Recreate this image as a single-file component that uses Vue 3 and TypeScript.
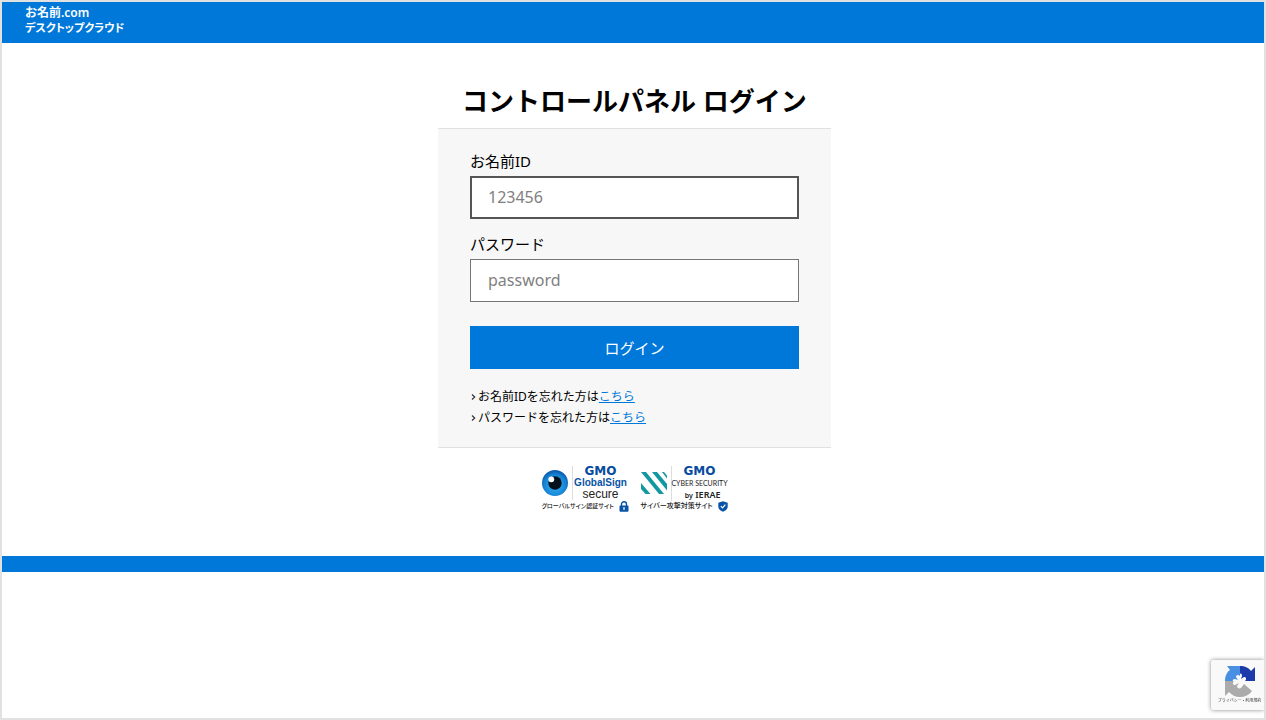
<script setup lang="ts">
import { ref } from 'vue'

interface HelpLink {
  text: string
  href: string
}

const accountId = ref('')
const password = ref('')
const helpLinks: HelpLink[] = [
  { text: 'お名前IDを忘れた方は', href: '#forgot-id' },
  { text: 'パスワードを忘れた方は', href: '#forgot-password' },
]
</script>

<template>
  <div class="page">
    <header class="header">
      <a class="brand" href="#home">
        <span class="brand-line">お名前<span class="brand-com">.com</span></span>
        <span class="brand-line brand-sub">デスクトップクラウド</span>
      </a>
    </header>

    <main class="main">
      <h1 class="title">コントロールパネル ログイン</h1>
      <form class="panel" @submit.prevent>
        <label class="label" for="account-id">お名前ID</label>
        <input id="account-id" v-model="accountId" class="field field-active" type="text" placeholder="123456" />
        <label class="label" for="password">パスワード</label>
        <input id="password" v-model="password" class="field" type="password" placeholder="password" />
        <button class="submit" type="submit">ログイン</button>
        <ul class="help">
          <li v-for="link in helpLinks" :key="link.href" class="help-item">
            <svg class="chevron" viewBox="0 0 8 8" aria-hidden="true">
              <path d="M2 1.5 4.7 4 2 6.5" fill="none" stroke="#333" stroke-width="1.2" />
            </svg>
            <span>{{ link.text }}<a class="link" :href="link.href">こちら</a></span>
          </li>
        </ul>
      </form>

      <div class="seals">
        <a class="seal" href="#globalsign">
          <span class="seal-top">
            <svg class="eye" viewBox="0 0 26 26" aria-hidden="true">
              <defs>
                <radialGradient id="iris" cx="50%" cy="60%" r="56%">
                  <stop offset="0.3" stop-color="#2ba0ea" />
                  <stop offset="0.75" stop-color="#1583d4" />
                  <stop offset="1" stop-color="#0b5fae" />
                </radialGradient>
              </defs>
              <circle cx="13" cy="13" r="13" fill="url(#iris)" />
              <circle cx="13" cy="13" r="6.7" fill="#03111d" />
              <circle cx="9.3" cy="9.3" r="2.9" fill="#fff" />
            </svg>
            <span class="seal-words">
              <span class="gmo">GMO</span>
              <span class="global-sign">GlobalSign</span>
              <span class="secure">secure</span>
            </span>
          </span>
          <span class="seal-caption seal-caption-small">
            <span>グローバルサイン認証サイト</span>
            <svg class="lock" viewBox="0 0 10 11" aria-hidden="true">
              <path d="M2.5 5V3.2a2.5 2.5 0 0 1 5 0V5" fill="none" stroke="#0753a5" stroke-width="1.4" />
              <rect x="0.5" y="4.5" width="9" height="6.3" rx="1" fill="#0753a5" />
              <path d="M5 6.2v2.6" stroke="#fff" stroke-width="1.4" />
            </svg>
          </span>
        </a>

        <a class="seal" href="#cybersecurity">
          <span class="seal-top">
            <svg class="stripes" viewBox="0 0 26 24" aria-hidden="true">
              <g fill="#1298a0">
                <path d="M0 1h5l18 22h-5Z" />
                <path d="M11 1h5l10 12v6.500Z" />
                <path d="M21 1h2l3 3.500v3Z" />
                <path d="M0 12 9.500 23h-5L0 18Z" />
              </g>
            </svg>
            <span class="seal-words">
              <span class="gmo">GMO</span>
              <span class="cyber">CYBER SECURITY</span>
              <span class="ierae"><small class="by">by</small> IERAE</span>
            </span>
          </span>
          <span class="seal-caption">
            <span>サイバー攻撃対策サイト</span>
            <svg class="lock" viewBox="0 0 10 11" aria-hidden="true">
              <path d="M5 .3 9.7 1.8v3.7c0 2.3-2 4.1-4.7 5.2C2.3 9.6.3 7.8.3 5.5V1.8Z" fill="#0753a5" />
              <path d="m2.8 5.2 1.7 1.7 2.9-3.2" fill="none" stroke="#fff" stroke-width="1.2" />
            </svg>
          </span>
        </a>
      </div>
    </main>

    <footer class="footer"></footer>

    <aside class="recaptcha">
      <svg class="recaptcha-logo" viewBox="0 0 32 32" aria-hidden="true">
        <path d="M1 16C1 11 3 7 6 5L3 1h13v10c-2-2-4-1-4 1l2 3-3-1c-2 0-3 1-2 2Z" fill="#4a90e2" />
        <path d="M16 1c5 0 9 2 11 5l4-4v14H21c2-2 1-4-1-4l-3 2 1-3c0-2-1-3-2-2Z" fill="#1c3aa9" />
        <path d="M1 16h9c-2 2-1 4 1 4l4-2-2 3c0 2 2 3 4 2l3-4 8 7c-3 4-7 6-12 6-5 0-8-2-11-5l-4 4Z" fill="#ababab" />
      </svg>
      <span class="recaptcha-text"><a href="#privacy">プライバシー</a> • <a href="#terms">利用規約</a></span>
    </aside>
  </div>
</template>

<style>
body {
  margin: 0;
}
</style>

<style scoped>
.page {
  box-sizing: border-box;
  min-height: 100vh;
  border: 2px solid #e1e1e1;
  background: #fff;
  color: #000;
  font-family: "Noto Sans", "Noto Sans CJK JP", sans-serif;
}
.header {
  display: flex;
  padding: 2px 24px 9px 23px;
  background: #0078d9;
}
.brand {
  display: flex;
  flex-direction: column;
  color: #fff;
  font-family: "Noto Sans CJK JP", sans-serif;
  font-size: 12px;
  font-weight: 700;
  line-height: 16px;
  text-decoration: none;
}
.brand-line {
  height: 15px;
}
.brand-com {
  font-family: "Noto Sans", sans-serif;
  font-size: 12px;
  font-weight: 600;
}
.brand-sub {
  font-size: 11px;
  font-feature-settings: "palt";
}
.main {
  display: flex;
  flex-direction: column;
  align-items: center;
  padding: 40px 16px 44px 19px;
}
.title {
  margin: 0 0 9px;
  font-size: 26px;
  font-weight: 700;
  line-height: 36px;
}
.panel {
  box-sizing: border-box;
  display: flex;
  flex-direction: column;
  width: 100%;
  max-width: 393px;
  padding: 21px 32px 19px;
  border-top: 1px solid #e1e1e1;
  border-bottom: 1px solid #e1e1e1;
  background: #f7f7f7;
}
.label {
  margin-bottom: 3px;
  font-size: 15px;
  line-height: 23px;
}
.field {
  box-sizing: border-box;
  width: 100%;
  height: 43px;
  margin: 0 0 14px;
  padding: 0 17px 2px;
  border: 1px solid #767676;
  border-radius: 0;
  background: #fff;
  font-family: inherit;
  font-size: 16px;
}
.field-active {
  padding: 0 16px 2px;
  border: 2px solid #555;
}
.field::placeholder {
  color: #808080;
}
.submit {
  height: 43px;
  margin: 10px 0 17px;
  padding: 0;
  border: 0;
  background: #0078d9;
  color: #fff;
  font-family: inherit;
  font-size: 15px;
}
.help {
  margin: 0;
  padding: 0;
  list-style: none;
}
.help-item {
  display: flex;
  align-items: center;
  font-size: 12px;
  line-height: 21px;
}
.chevron {
  width: 8px;
  height: 8px;
}
.link {
  color: #0078d9;
}
.seals {
  display: flex;
  gap: 12px;
  margin-top: 18px;
}
.seal {
  display: flex;
  flex-direction: column;
  width: 87px;
  color: #222;
  text-decoration: none;
}
.seal-top {
  display: flex;
  align-items: center;
  justify-content: space-between;
  height: 34px;
}
.eye,
.stripes {
  flex: none;
  width: 26px;
  height: 26px;
}
.seal-words {
  display: flex;
  flex-direction: column;
  align-items: center;
  width: 56px;
  border-left: 1px solid #ddd;
  white-space: nowrap;
}
.gmo {
  color: #074ba0;
  font-family: "DejaVu Sans", sans-serif;
  font-size: 12px;
  font-weight: 700;
  line-height: 11px;
}
.global-sign {
  color: #0753a5;
  font-family: "Liberation Sans", Arial, sans-serif;
  font-size: 10px;
  font-weight: 700;
  line-height: 12px;
}
.secure {
  font-family: "Liberation Sans", Arial, sans-serif;
  font-size: 12px;
  line-height: 11px;
}
.cyber {
  font-family: Lato, sans-serif;
  font-size: 7px;
  line-height: 12px;
}
.ierae {
  align-self: flex-end;
  padding-right: 7px;
  font-size: 9px;
  font-weight: 600;
  line-height: 11px;
}
.by {
  font-size: 7px;
}
.seal-caption {
  display: flex;
  align-items: center;
  justify-content: space-between;
  height: 12px;
  font-size: 7px;
  font-weight: 500;
  font-feature-settings: "palt";
  line-height: 12px;
  white-space: nowrap;
}
.seal-caption-small {
  font-size: 6px;
}
.lock {
  flex: none;
  width: 10px;
  height: 11px;
}
.footer {
  height: 16px;
  background: #0078d9;
}
.recaptcha {
  position: fixed;
  right: 2px;
  bottom: 10px;
  display: flex;
  flex-direction: column;
  align-items: center;
  box-sizing: border-box;
  width: 53px;
  height: 50px;
  padding: 5px 0 0 4px;
  overflow: hidden;
  border-radius: 2px 0 0 2px;
  background: #f9f9f9;
  box-shadow: 0 0 4px #888;
  clip-path: inset(-6px 0 -6px -6px);
}
.recaptcha-logo {
  flex: none;
  width: 32px;
  height: 32px;
}
.recaptcha-text {
  color: #333;
  font-size: 4px;
  line-height: 8px;
  white-space: nowrap;
}
.recaptcha-text a {
  color: inherit;
  text-decoration: none;
}
</style>
